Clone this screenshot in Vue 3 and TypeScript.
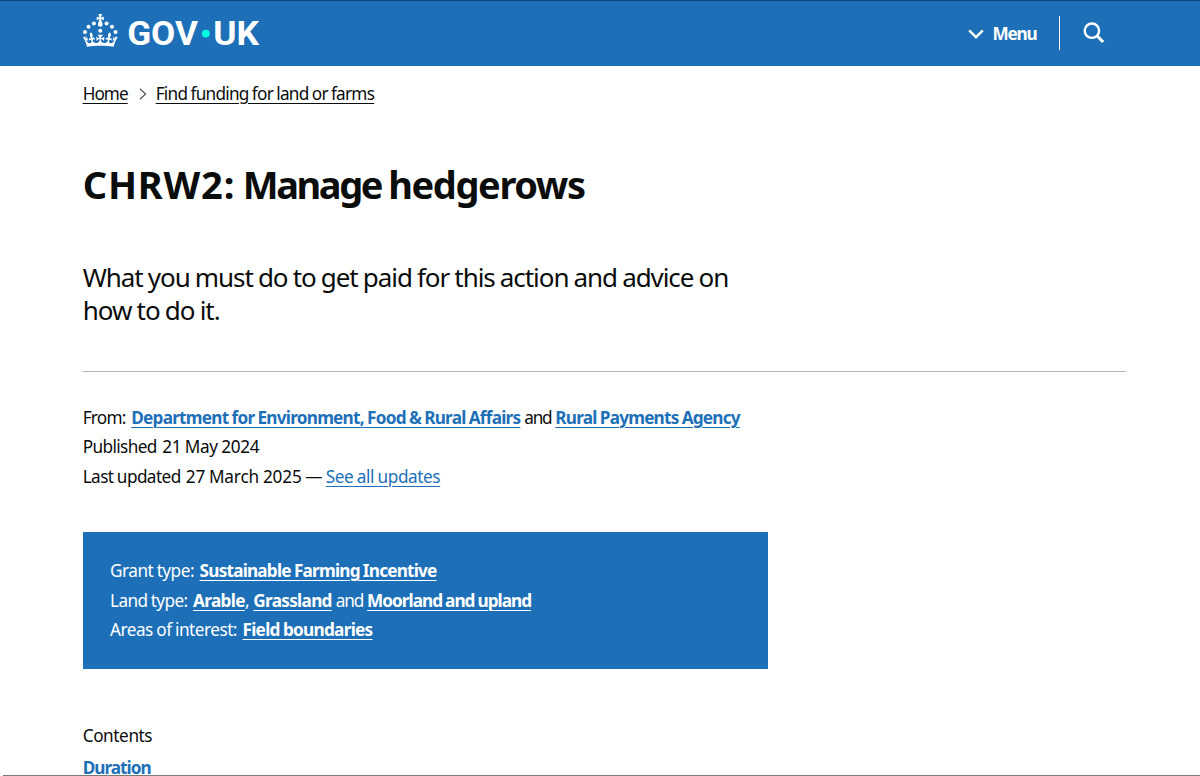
<script setup lang="ts">
import type { Directive } from 'vue'

interface Run {
  text: string
  width: number
  gap?: number
  kind?: 'link' | 'bold'
}

const title: Run[] = [
  { text: 'CHRW2:', width: 152.5 },
  { text: 'Manage', width: 138.5, gap: 7.5 },
  { text: 'hedgerows', width: 196.5, gap: 7 },
]

const organisations: Run[][] = [
  [
    { text: 'From:', width: 43 },
    { text: 'Department for Environment, Food & Rural Affairs', width: 389, gap: 5.6, kind: 'bold' },
    { text: 'and', width: 27, gap: 4 },
    { text: 'Rural Payments Agency', width: 184.5, gap: 4, kind: 'bold' },
  ],
  [
    { text: 'Published', width: 74 },
    { text: '21 May 2024', width: 97, gap: 5.6 },
  ],
  [
    { text: 'Last updated', width: 98 },
    { text: '27 March 2025', width: 116, gap: 5 },
    { text: '—', width: 17, gap: 3.5 },
    { text: 'See all updates', width: 114.5, gap: 3.5, kind: 'link' },
  ],
]

const grant: Run[][] = [
  [
    { text: 'Grant type:', width: 84 },
    { text: 'Sustainable Farming Incentive', width: 237, gap: 5.6, kind: 'bold' },
  ],
  [
    { text: 'Land type:', width: 77.5 },
    { text: 'Arable', width: 52, gap: 5.5, kind: 'bold' },
    { text: ',', width: 4 },
    { text: 'Grassland', width: 78.5, gap: 4.3, kind: 'bold' },
    { text: 'and', width: 27.3, gap: 4 },
    { text: 'Moorland and upland', width: 164, gap: 4, kind: 'bold' },
  ],
  [
    { text: 'Areas of interest:', width: 127 },
    { text: 'Field boundaries', width: 130, gap: 5.5, kind: 'bold' },
  ],
]

// Tracks the text so that it fills the given measure.
const vFit: Directive<HTMLElement, number> = {
  mounted(el, { value }) {
    const range = document.createRange()
    range.selectNodeContents(el)
    const natural = range.getBoundingClientRect().width
    const count = (el.textContent ?? '').length
    el.style.letterSpacing = `${(value - natural) / count}px`
  },
}
</script>

<template>
  <div class="page">
    <header class="header">
      <svg class="logo" viewBox="0 0 324 60" role="img" aria-label="GOV.UK">
        <g fill="#fff">
          <circle cx="20" cy="17.6" r="3.7" />
          <circle cx="10.2" cy="23.5" r="3.7" />
          <circle cx="3.7" cy="33.2" r="3.7" />
          <circle cx="31.7" cy="30.6" r="3.7" />
          <circle cx="43.3" cy="17.6" r="3.7" />
          <circle cx="53.2" cy="23.5" r="3.7" />
          <circle cx="59.7" cy="33.2" r="3.7" />
          <path d="M33.1,9.8c.2-.1.3-.3.5-.5l4.6,2.4v-6.8l-4.6,1.5c-.1-.2-.3-.3-.5-.5l1.9-5.9h-6.7l1.9,5.9c-.2.1-.3.3-.5.5l-4.6-1.5v6.8l4.6-2.4c.1.2.3.3.5.5l-2.6,8c-.9,2.8,1.2,5.7,4.1,5.7h0c3,0,5.1-2.9,4.1-5.7l-2.6-8ZM37,37.9s-3.4,3.8-4.1,6.1c2.2,0,4.2-.5,6.4-2.8l-.7,8.5c-2-2.8-4.4-4.1-5.7-3.8.1,3.1.5,6.7,5.8,7.2,3.7.3,6.7-1.5,7-3.8.4-2.6-2-4.3-3.7-1.6-1.4-4.5,2.4-6.1,4.9-3.2-1.9-4.5-1.8-7.7,2.4-10.9,3,4,2.6,7.3-1.2,11.1,2.4-1.3,6.2,0,4,4.6-1.2-2.8-3.7-2.2-4.2.2-.3,1.7.7,3.7,3,4.2,1.9.3,4.7-.9,7-5.9-1.3,0-2.4.7-3.9,1.7l2.4-8c.6,2.3,1.4,3.7,2.2,4.5.6-1.6.5-2.8,0-5.3l5,1.8c-2.6,3.6-5.2,8.7-7.3,17.5-7.4-1.1-15.7-1.7-24.5-1.7h0c-8.8,0-17.1.6-24.5,1.7-2.1-8.9-4.7-13.9-7.3-17.5l5-1.8c-.5,2.5-.6,3.7,0,5.3.8-.8,1.6-2.3,2.2-4.5l2.4,8c-1.5-1-2.6-1.7-3.9-1.7,2.3,5,5.2,6.2,7,5.9,2.3-.4,3.3-2.4,3-4.2-.5-2.4-3-3.1-4.2-.2-2.2-4.6,1.6-6,4-4.6-3.7-3.7-4.2-7.1-1.2-11.1,4.2,3.2,4.3,6.4,2.4,10.9,2.5-2.8,6.3-1.3,4.9,3.2-1.8-2.7-4.1-1-3.7,1.6.3,2.3,3.3,4.1,7,3.8,5.4-.5,5.7-4.2,5.8-7.2-1.3-.2-3.7,1-5.7,3.8l-.7-8.5c2.2,2.3,4.2,2.7,6.4,2.8-.7-2.3-4.1-6.1-4.1-6.1h10.6,0Z" />
          <text class="wordmark" x="81" y="57" textLength="130" lengthAdjust="spacingAndGlyphs">GOV</text>
          <text class="wordmark" x="239" y="57" textLength="84" lengthAdjust="spacingAndGlyphs">UK</text>
        </g>
        <circle cx="225.5" cy="36" r="7.3" fill="#00ffe0" />
      </svg>
      <nav class="tools">
        <svg class="chevron" viewBox="0 0 16 10"><path d="M1.2 1.4 8 8.2 14.8 1.4" /></svg>
        <span v-fit="44" class="menu">Menu</span>
        <span class="bar"></span>
        <svg class="search" viewBox="0 0 22 22">
          <circle cx="8.9" cy="8.7" r="7.2" />
          <path d="m14 13.8 6.2 6.2" />
        </svg>
      </nav>
    </header>

    <main class="content">
      <nav class="crumbs">
        <a v-fit="45">Home</a>
        <svg class="sep" viewBox="0 0 8 12"><path d="M1 .7 6.6 6 1 11.3" /></svg>
        <a v-fit="218.5">Find funding for land or farms</a>
      </nav>

      <h1>
        <span
          v-for="(run, i) in title"
          :key="i"
          v-fit="run.width"
          :style="{ marginLeft: (run.gap ?? 0) + 'px' }"
        >{{ run.text }}</span>
      </h1>

      <p class="lead">
        <span v-fit="645.5">What you must do to get paid for this action and advice on</span>
        <span v-fit="137">how to do it.</span>
      </p>

      <hr />

      <section class="meta">
        <div v-for="(row, r) in organisations" :key="r" class="row">
          <span
            v-for="(run, i) in row"
            :key="i"
            v-fit="run.width"
            :class="run.kind"
            :style="{ marginLeft: (run.gap ?? 0) + 'px' }"
          >{{ run.text }}</span>
        </div>
      </section>

      <section class="meta grant">
        <div v-for="(row, r) in grant" :key="r" class="row">
          <span
            v-for="(run, i) in row"
            :key="i"
            v-fit="run.width"
            :class="run.kind"
            :style="{ marginLeft: (run.gap ?? 0) + 'px' }"
          >{{ run.text }}</span>
        </div>
      </section>

      <nav class="contents">
        <span v-fit="69.5">Contents</span>
        <a v-fit="68">Duration</a>
      </nav>
    </main>
    <div class="edge"></div>
  </div>
</template>

<style>
body {
  margin: 0;
  overflow: hidden;
  background: #fff;
}
</style>

<style scoped>
.page {
  position: relative;
  width: 1200px;
  height: 776px;
  overflow: hidden;
  box-sizing: border-box;
  background: #fff;
  color: #0b0c0c;
  font-family: "Noto Sans", "Open Sans", sans-serif;
  font-size: 17.2px;
  word-spacing: -0.03em;
  white-space: nowrap;
}
.header {
  display: flex;
  justify-content: space-between;
  box-sizing: border-box;
  height: 66.3px;
  padding: 13px 95px 0 82.5px;
  border-top: 1px solid #0d4380;
  background: #1d70b8;
}
.logo {
  width: 176.5px;
  height: 32.7px;
  overflow: visible;
}
.wordmark {
  font-family: Roboto, sans-serif;
  font-size: 60px;
  font-weight: 700;
}
.tools {
  display: flex;
  align-items: center;
  height: 38px;
  color: #fff;
}
.chevron {
  width: 16px;
  height: 10px;
  margin-top: 2px;
}
.chevron path,
.search path,
.search circle {
  fill: none;
  stroke: #fff;
  stroke-width: 2.4;
}
.search path {
  stroke-width: 3;
}
.menu {
  width: 44px;
  margin-left: 8.5px;
  font-weight: 700;
}
.bar {
  width: 1px;
  height: 34px;
  margin: 0 23.5px 0 22px;
  background: #fff;
}
.search {
  width: 22px;
  height: 22px;
}
.content {
  padding-left: 82.7px;
}
.crumbs {
  display: flex;
  align-items: center;
  height: 24px;
  padding-top: 15px;
}
.crumbs a {
  text-decoration: underline 1px;
  text-underline-offset: 3px;
}
.sep {
  width: 8px;
  height: 12px;
  margin: 1px 9px 0 11px;
}
.sep path {
  fill: none;
  stroke: #505a5f;
  stroke-width: 1.2;
}
h1 {
  display: flex;
  margin: 53px 0 0;
  font-size: 38px;
  font-weight: 700;
  line-height: 52px;
}
.lead {
  display: flex;
  flex-direction: column;
  align-items: flex-start;
  margin: 51px 0 0;
  font-size: 26px;
  line-height: 32.6px;
}
hr {
  width: 1043.5px;
  height: 1px;
  margin: 45px 0 0;
  border: 0;
  background: #b1b4b6;
}
.meta {
  margin-top: 30.4px;
}
.row {
  display: flex;
  height: 29.4px;
  line-height: 29.4px;
}
.row span {
  white-space: pre;
}
.bold {
  color: #1d70b8;
  font-weight: 700;
}
.link {
  color: #1d70b8;
}
.bold,
.link {
  text-decoration: underline 1px;
  text-underline-offset: 3px;
}
.grant {
  box-sizing: border-box;
  width: 685px;
  height: 137px;
  margin-top: 41px;
  padding: 24.2px 27.3px;
  background: #1d70b8;
  color: #fff;
}
.grant .bold {
  color: #fff;
}
.contents {
  display: flex;
  flex-direction: column;
  align-items: flex-start;
  margin-top: 51px;
  line-height: 32px;
}
.contents a {
  color: #1d70b8;
  font-weight: 700;
}
.edge {
  position: absolute;
  right: 0;
  bottom: 0;
  left: 3px;
  height: 1px;
  background: #77797b;
}
</style>
